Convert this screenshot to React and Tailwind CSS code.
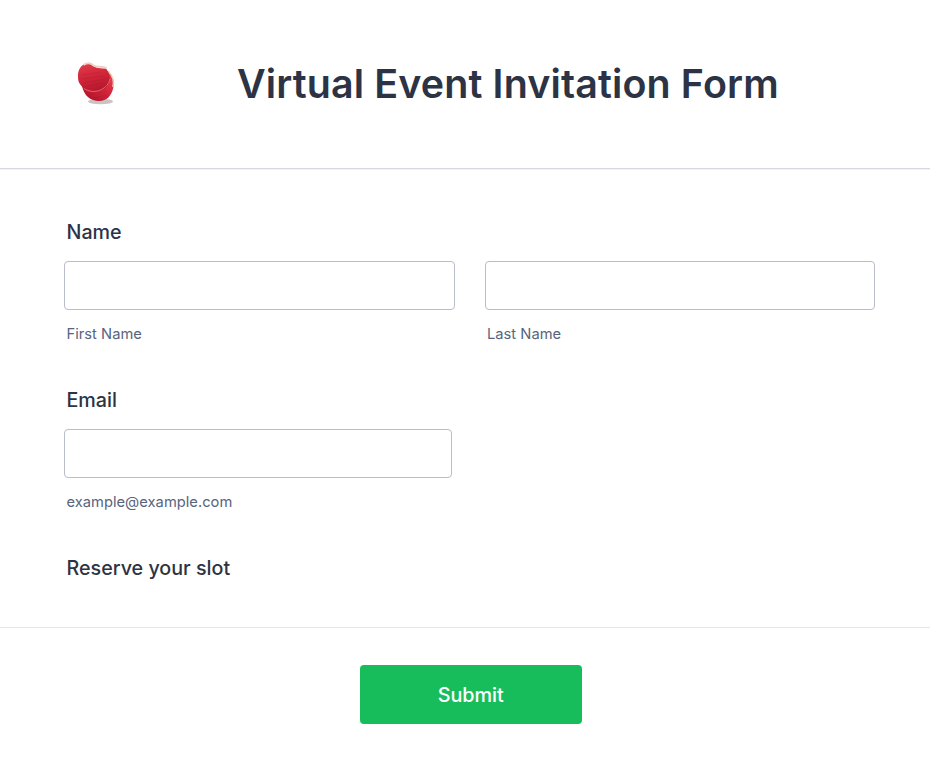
const inputClass = 'h-[49px] w-full rounded border border-[#b8bdc9] bg-white px-3 outline-none';

const Label = ({ children }) => (
  <div className="pl-[2.5px] text-[19.7px] leading-7 font-medium text-[#2c3345]">{children}</div>
);

const Field = ({ name, type = 'text', hint }) => (
  <div>
    <input name={name} type={type} aria-label={hint} className={inputClass} />
    <div className="mt-3 pl-[2.5px] text-[14.7px] leading-6 tracking-[0.02px] text-[#57647e]">{hint}</div>
  </div>
);

// 3D red ball logo
const Logo = () => (
  <svg width="64" height="64" viewBox="0 2 64 64" className="block">
    <defs>
      <linearGradient id="upper" x1="0.3" y1="0" x2="0.6" y2="1">
        <stop offset="0" stopColor="#df3a48" />
        <stop offset="0.5" stopColor="#cf2439" />
        <stop offset="1" stopColor="#b3172c" />
      </linearGradient>
      <linearGradient id="lower" x1="0.8" y1="0.1" x2="0.3" y2="1">
        <stop offset="0" stopColor="#e2404b" />
        <stop offset="0.5" stopColor="#d5253b" />
        <stop offset="1" stopColor="#b0142b" />
      </linearGradient>
    </defs>
    <ellipse cx="35.5" cy="51.5" rx="12.5" ry="2.8" fill="#c9c3c3" />
    <path d="M42 21C49 26 50 33 48 39C46 46 42 51 34 51C26 51 19 46 17 36Z" fill="url(#lower)" />
    <path d="M43 21C48 26 49.2 32 47.8 37" fill="none" stroke="#efc9b8" strokeWidth="1.5" />
    <path d="M13 27C12.5 20 16 15 21 13.5C24 13 27 14 29 16.5C33 18.5 37 18.5 41 18.5C44 22 46 28 44 33C42 38 37 41.5 31 41.5C24 41.5 19 39.5 16.5 36C14 33 13 31 13 27Z" fill="url(#upper)" />
    <path d="M18.5 14.8C23 12.3 26 12.8 28.5 15.5C32 17.8 37 15.5 41.5 18" fill="none" stroke="#efd0c0" strokeWidth="2" />
    <path d="M19 38.5C23 41.5 30 42.5 35.5 40C41 37.5 44 33.5 45 29" fill="none" stroke="#ee6670" strokeWidth="1" />
    <path d="M17 25L36 22M16 29L38 26M18 33L40 29M21 36L39 33M24 45L42 41M28 48L42 45" fill="none" stroke="#9e1427" strokeWidth="0.8" opacity="0.25" />
  </svg>
);

const App = () => {
  return (
    <form
      className="h-[774px] w-[930px] overflow-hidden bg-white font-['Inter',sans-serif] text-[#2c3345]"
      onSubmit={(e) => e.preventDefault()}
    >
      <header className="flex h-[169px] items-center border-b border-[#d7d8e1] pl-[65px] shadow-[0_1px_0_#f2f2f6]">
        <Logo />
        <h1 className="ml-[108px] pt-0.5 text-[39.4px] leading-none font-semibold tracking-[0.14px] whitespace-nowrap">
          Virtual Event Invitation Form
        </h1>
      </header>

      <main className="h-[459px] border-b border-[#e5e6ee] px-16 pt-[49px]">
        <section>
          <Label>Name</Label>
          <div className="mt-[15px] grid w-[811px] grid-cols-2 gap-[30px]">
            <Field name="first" hint="First Name" />
            <Field name="last" hint="Last Name" />
          </div>
        </section>

        <section className="mt-10 w-[388px]">
          <Label>Email</Label>
          <div className="mt-[15px]">
            <Field name="email" type="email" hint="example@example.com" />
          </div>
        </section>

        <section className="mt-10">
          <Label>Reserve your slot</Label>
        </section>
      </main>

      <footer className="flex pt-[37px] pl-[359.5px]">
        <button
          type="submit"
          className="h-[59px] w-[222.5px] rounded bg-[#18bd5b] pt-0.5 text-[19.8px] font-medium text-white"
        >
          Submit
        </button>
      </footer>
    </form>
  );
};

export default App;
